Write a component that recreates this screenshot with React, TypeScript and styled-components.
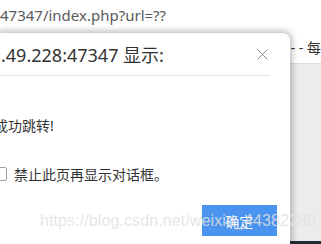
import styled, { createGlobalStyle } from 'styled-components';

const GlobalStyle = createGlobalStyle`
  html, body {
    margin: 0;
    padding: 0;
    background: #ffffff;
    font-family: "Noto Sans", "Noto Sans CJK SC", sans-serif;
  }
`;

const Page = styled.div`
  position: relative;
  width: 321px;
  height: 244px;
  overflow: hidden;
  display: flex;
  flex-direction: column;
  background: #ffffff;
`;

const AddressBar = styled.div`
  height: 29px;
  display: flex;
  align-items: center;
  padding-bottom: 1px;
  font-size: 15px;
  color: #5a5a5a;
  white-space: nowrap;
`;

const Body = styled.div`
  flex: 1;
  display: flex;
  min-height: 0;
`;

const Dialog = styled.div`
  width: 290px;
  margin-top: 3px;
  background: #ffffff;
  border-top-right-radius: 7px;
  box-shadow: 0 0 6px 2px rgba(0, 0, 0, 0.28);
  position: relative;
  z-index: 1;
  display: flex;
  flex-direction: column;
  overflow: hidden;
`;

const TitleRow = styled.div`
  height: 42px;
  margin-right: 20px;
  display: flex;
  align-items: center;
  justify-content: space-between;
  border-bottom: 1px solid #e5e5e5;
`;

const Title = styled.div`
  font-size: 18px;
  color: #333333;
  white-space: nowrap;
  padding-left: 1px;
`;

const Close = styled.svg`
  width: 11px;
  height: 11px;
  margin-right: 2px;
  margin-top: 1px;
`;

const Message = styled.div`
  margin-top: 39px;
  margin-left: -6px;
  font-size: 14px;
  color: #333333;
  white-space: nowrap;
`;

const CheckRow = styled.label`
  margin-top: 29px;
  display: flex;
  align-items: center;
  gap: 7px;
  font-size: 14px;
  color: #333333;
  white-space: nowrap;
`;

const Box = styled.span`
  width: 14px;
  height: 14px;
  margin-left: -7px;
  border: 1px solid #a0a0a0;
  border-radius: 2px;
  box-sizing: border-box;
`;

const Actions = styled.div`
  margin-top: 21px;
  padding-right: 13px;
  display: flex;
  justify-content: flex-end;
`;

const Button = styled.button`
  width: 75px;
  height: 31px;
  border: none;
  background: #4a93ee;
  color: #ffffff;
  font-family: inherit;
  font-size: 14px;
  padding: 0;
`;

const Side = styled.div`
  flex: 1;
  display: flex;
  flex-direction: column;
`;

const Bookmarks = styled.div`
  height: 33px;
  display: flex;
  align-items: center;
  font-size: 14px;
  color: #333333;
  white-space: nowrap;
  padding-left: 1px;
  border-bottom: 1px solid #dcdcdc;
`;

const Gray = styled.div`
  flex: 1;
  background: #ececec;
  display: flex;
  flex-direction: column;
  justify-content: flex-end;
`;

const DarkStrip = styled.div`
  height: 3px;
  background: #1f2a36;
`;

const Watermark = styled.div`
  position: absolute;
  left: 40px;
  top: 212px;
  font-family: "Liberation Sans", Arial, sans-serif;
  font-size: 16px;
  letter-spacing: 0.1px;
  color: rgba(225, 225, 225, 0.85);
  white-space: nowrap;
  pointer-events: none;
  z-index: 2;
`;

export default function App() {
  return (
    <>
      <GlobalStyle />
      <Page>
        <AddressBar>47347/index.php?url=??</AddressBar>
        <Body>
          <Dialog>
            <TitleRow>
              <Title>.49.228:47347 显示:</Title>
              <Close viewBox="0 0 11 11">
                <path d="M0.5 0.5 L10.5 10.5 M10.5 0.5 L0.5 10.5" stroke="#8a8a8a" strokeWidth="1" fill="none" />
              </Close>
            </TitleRow>
            <Message>成功跳转!</Message>
            <CheckRow>
              <Box />
              禁止此页再显示对话框。
            </CheckRow>
            <Actions>
              <Button>确定</Button>
            </Actions>
          </Dialog>
          <Side>
            <Bookmarks>- - 每</Bookmarks>
            <Gray>
              <DarkStrip />
            </Gray>
          </Side>
        </Body>
        <Watermark>https://blog.csdn.net/weixin_44382289</Watermark>
      </Page>
    </>
  );
}
